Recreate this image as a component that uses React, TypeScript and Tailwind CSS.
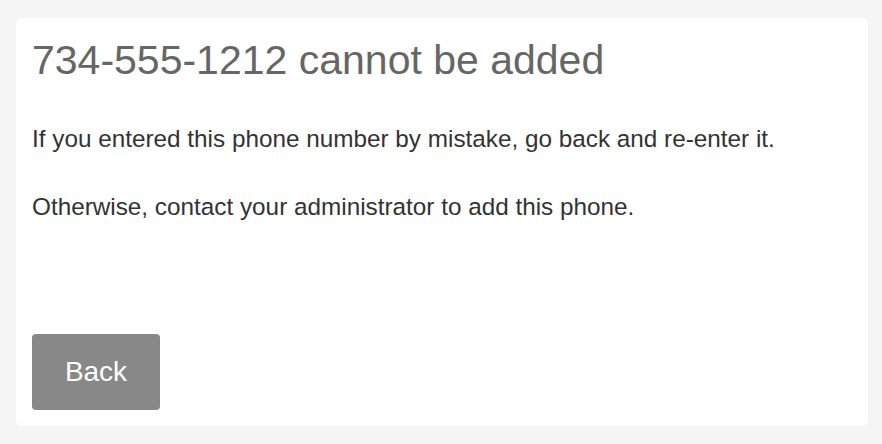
import React from "react";

const App: React.FC = () => {
  return (
    <div className="w-[882px] h-[444px] bg-[#f5f5f5] pt-[18px] pl-4 pr-[14px] pb-[18px] font-['Liberation_Sans',Arial,sans-serif]">
      <div className="h-full bg-white rounded-md px-4 pt-[18px] pb-4 flex flex-col">
        <h1 className="text-[41px] leading-[49px] text-[#666666]">
          734-555-1212 cannot be added
        </h1>
        <p className="mt-[38px] text-[24.3px] leading-[32px] text-[#333333]">
          If you entered this phone number by mistake, go back and re-enter it.
        </p>
        <p className="mt-[36px] text-[24.3px] leading-[32px] text-[#333333]">
          Otherwise, contact your administrator to add this phone.
        </p>
        <div className="mt-auto">
          <button className="w-32 h-[76px] rounded bg-[#888888] text-white text-[28px]">
            Back
          </button>
        </div>
      </div>
    </div>
  );
};

export default App;
